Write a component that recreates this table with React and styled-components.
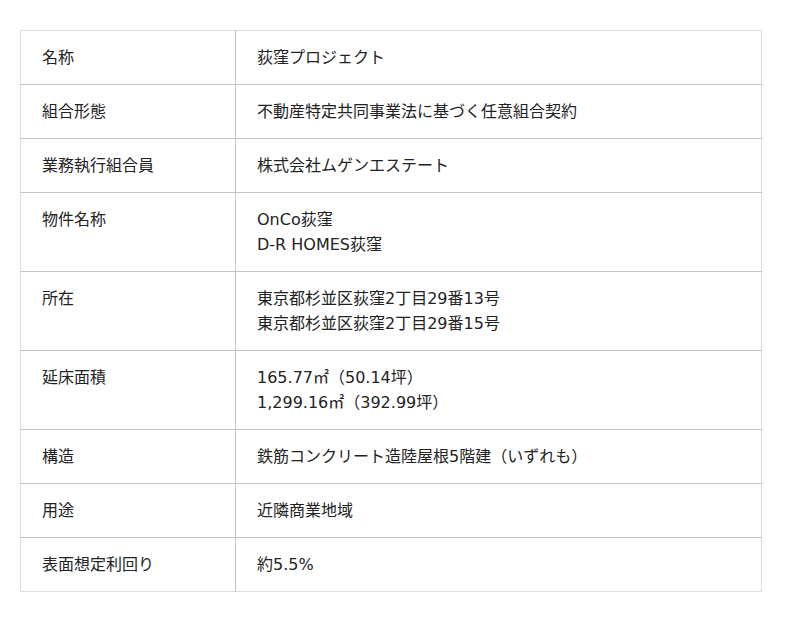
import React from "react";
import styled, { createGlobalStyle } from "styled-components";

const Global = createGlobalStyle`
  html, body { margin: 0; padding: 0; background: #fff; }
  body {
    font-family: "DejaVu Sans", "Noto Sans CJK JP", sans-serif;
    color: #222;
  }
`;

const Wrap = styled.div`
  padding: 30px 38px 30px 20px;
`;

const Table = styled.table`
  width: 742px;
  table-layout: fixed;
  border-collapse: collapse;
  border: 1px solid #dcdcdc;
  font-family: "DejaVu Sans", "Noto Sans CJK JP", sans-serif;
  font-size: 16px;
  line-height: 25px;
  color: #222;
`;

const Row = styled.tr`
  border-bottom: 1px solid #c4c4c4;
  &:last-child { border-bottom: 1px solid #dcdcdc; }
`;

const Head = styled.th`
  width: 172px;
  text-align: left;
  font-weight: normal;
  vertical-align: top;
  padding: 14px 21px;
  border-right: 1px solid #c4c4c4;
`;

const Cell = styled.td`
  vertical-align: top;
  padding: 14px 21px;
`;

const rows = [
  ["名称", ["荻窪プロジェクト"]],
  ["組合形態", ["不動産特定共同事業法に基づく任意組合契約"]],
  ["業務執行組合員", ["株式会社ムゲンエステート"]],
  ["物件名称", ["OnCo荻窪", "D-R HOMES荻窪"]],
  ["所在", ["東京都杉並区荻窪2丁目29番13号", "東京都杉並区荻窪2丁目29番15号"]],
  ["延床面積", ["165.77㎡（50.14坪）", "1,299.16㎡（392.99坪）"]],
  ["構造", ["鉄筋コンクリート造陸屋根5階建（いずれも）"]],
  ["用途", ["近隣商業地域"]],
  ["表面想定利回り", ["約5.5%"]],
];

export default function App() {
  return (
    <>
      <Global />
      <Wrap>
        <Table>
          <tbody>
            {rows.map(([k, v]) => (
              <Row key={k}>
                <Head>{k}</Head>
                <Cell>
                  {v.map((line, i) => (
                    <React.Fragment key={i}>
                      {i > 0 && <br />}
                      {line}
                    </React.Fragment>
                  ))}
                </Cell>
              </Row>
            ))}
          </tbody>
        </Table>
      </Wrap>
    </>
  );
}
